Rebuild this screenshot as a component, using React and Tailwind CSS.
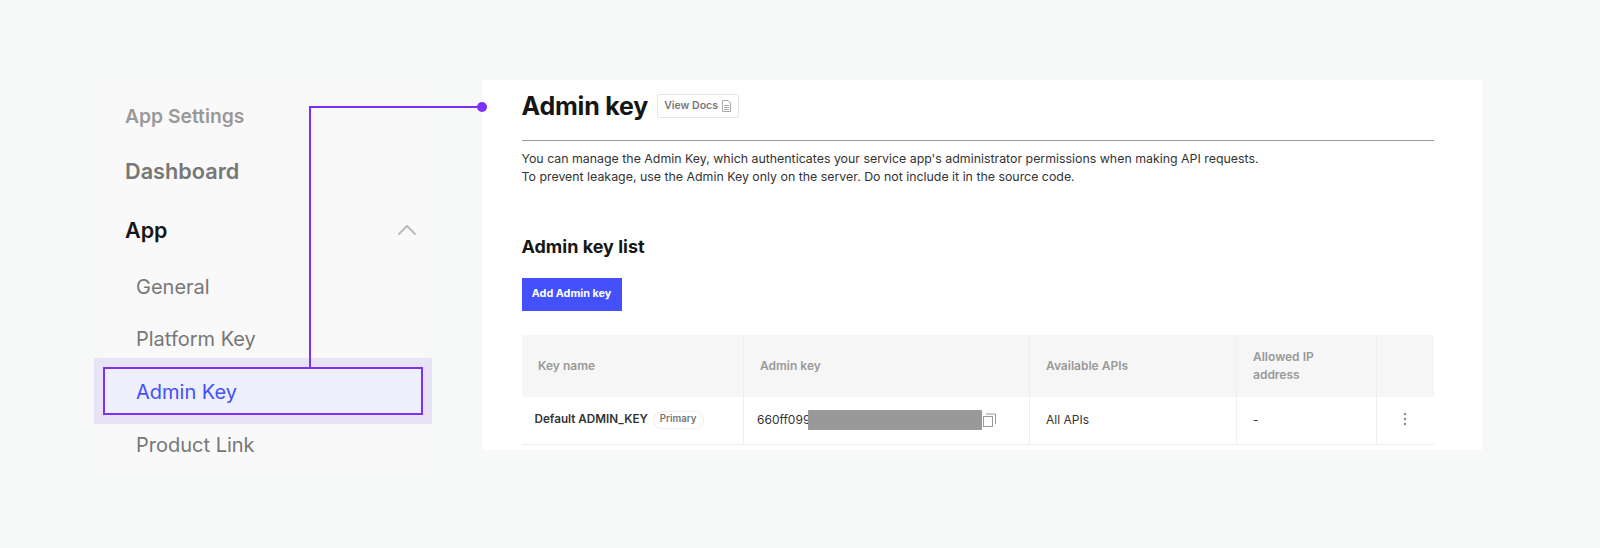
import React from "react";
import { ChevronUp } from "lucide-react";

function DocIcon() {
  return (
    <svg width="11" height="12" viewBox="0 0 11 12" fill="none" stroke="#aaaaaa" strokeWidth="1">
      <path d="M1.5 .5h5.5l2.500 2.500v8.500h-8z" />
      <path d="M3 5.500h5M3 7.500h5M3 9.500h5" />
    </svg>
  );
}

function CopyIcon() {
  return (
    <svg width="13" height="14" viewBox="0 0 13 14" fill="none" stroke="#999999" strokeWidth="1">
      <rect x=".5" y="3.500" width="9" height="10" />
      <path d="M3 1h9.500v10" />
    </svg>
  );
}

function Th({ children, className }) {
  return (
    <div className={"flex items-center h-[62px] bg-[#f6f6f6] border-r border-[#eeeeee] pb-[1px] text-[12px] leading-[18px] font-semibold text-[#999999] " + className}>
      {children}
    </div>
  );
}

function Td({ children, className }) {
  return <div className={"flex items-center h-[48px] border-b border-r border-[#eeeeee] text-[#333333] " + className}>{children}</div>;
}

export default function App() {
  return (
    <div className="relative h-[548px] w-[1600px] bg-[#f7f8f8] pt-[80px] pl-[104px] flex items-start font-['Inter',sans-serif] overflow-hidden">
      <aside className="w-[320px] h-[389px] bg-[#f9f9f9] pl-[21px] pr-[1px] shrink-0">
        <div className="text-[19.300px] leading-[26px] font-semibold text-[#999999] mt-[23px]">App Settings</div>
        <div className="text-[21.700px] leading-[30px] font-semibold text-[#777777] mt-[27px]">Dashboard</div>
        <div className="flex items-center justify-between mt-[28px]">
          <span className="text-[21.500px] leading-[30px] font-semibold text-[#161616]">App</span>
          <ChevronUp size={32} strokeWidth={1.5} className="text-[#bbbbbb]" />
        </div>
        <div className="text-[20px] leading-[30px] text-[#777777] mt-[26px] pl-[11px]">General</div>
        <div className="text-[20px] leading-[30px] text-[#777777] mt-[22px] pl-[11px]">Platform Key</div>
        <div className="relative text-[20px] leading-[30px] text-[#4350fb] mt-[23px] pl-[11px]">
          <span className="absolute -left-[31px] -top-[19px] w-[338px] h-[66px] bg-[#e9e3f8]" />
          <span className="absolute -left-[22px] -top-[10px] w-[320px] h-[48px] bg-[#edeffd] border-2 border-[#7b2ff7]" />
          <span className="relative">Admin Key</span>
        </div>
        <div className="text-[20px] leading-[30px] text-[#777777] mt-[23px] pl-[11px]">Product Link</div>
      </aside>

      <main className="ml-[58px] w-[1000px] h-[370px] bg-white pl-[39.500px] pr-[48px]">
        <div className="flex items-center h-[61px] border-b border-[#999999] pb-[8px]">
          <h1 className="text-[25px] leading-[36px] font-bold text-[#161616] tracking-[-0.2px]">Admin key</h1>
          <button className="ml-[9px] h-[24px] w-[82px] flex items-center justify-center gap-[3px] border border-[#e6e6e6] rounded-[2px] text-[10.500px] font-semibold text-[#777777]">
            View Docs <DocIcon />
          </button>
        </div>
        <p className="mt-[9px] text-[12.360px] leading-[17.500px] text-[#333333]">
          You can manage the Admin Key, which authenticates your service app's administrator permissions when making API requests.
          <br />
          To prevent leakage, use the Admin Key only on the server. Do not include it in the source code.
        </p>
        <h2 className="mt-[50px] text-[18px] leading-[24px] font-bold text-[#161616]">Admin key list</h2>
        <button className="mt-[19px] block w-[100px] h-[33px] bg-[#4350fb] text-white text-[10.800px] font-bold">Add Admin key</button>
        <div className="mt-[24px] grid grid-cols-[222.500px_286px_207px_140px_57px]">
          <Th className="pl-[16.500px]">Key name</Th>
          <Th className="pl-[16px]">Admin key</Th>
          <Th className="pl-[16px]">Available APIs</Th>
          <Th className="pl-[16px] pr-[40px]">Allowed IP address</Th>
          <Th className="border-r-0"></Th>
          <Td className="pl-[13px] pb-[2px] text-[11.700px] font-semibold gap-[5px]">
            Default ADMIN_KEY
            <span className="h-[18px] px-[6px] flex items-center rounded-full border border-[#eeeeee] text-[9.700px] text-[#777777]">Primary</span>
          </Td>
          <Td className="relative pl-[13px] pb-[2px] text-[12px]">
            660ff099
            <span className="absolute left-[64px] top-[13px] w-[174px] h-[20px] rounded-[1px] bg-[#999999]" />
            <span className="absolute left-[239px] top-[16px]"><CopyIcon /></span>
          </Td>
          <Td className="pl-[16px] pb-[2px] text-[12px]">All APIs</Td>
          <Td className="pl-[16px] pb-[2px] text-[12px]">-</Td>
          <Td className="border-r-0 justify-center pb-[4px] pr-[2px]">
            <svg width="4" height="14" viewBox="0 0 4 14" fill="#8a8a8a"><circle cx="2" cy="2" r="1.200" /><circle cx="2" cy="7" r="1.200" /><circle cx="2" cy="12" r="1.200" /></svg>
          </Td>
        </div>
      </main>

      <span className="absolute left-[309px] top-[106px] w-[173px] h-[2px] bg-[#7b2ff7]" />
      <span className="absolute left-[309px] top-[106px] w-[2px] h-[261px] bg-[#7b2ff7]" />
      <span className="absolute left-[477px] top-[102px] w-[10px] h-[10px] rounded-full bg-[#7b2ff7]" />
    </div>
  );
}
